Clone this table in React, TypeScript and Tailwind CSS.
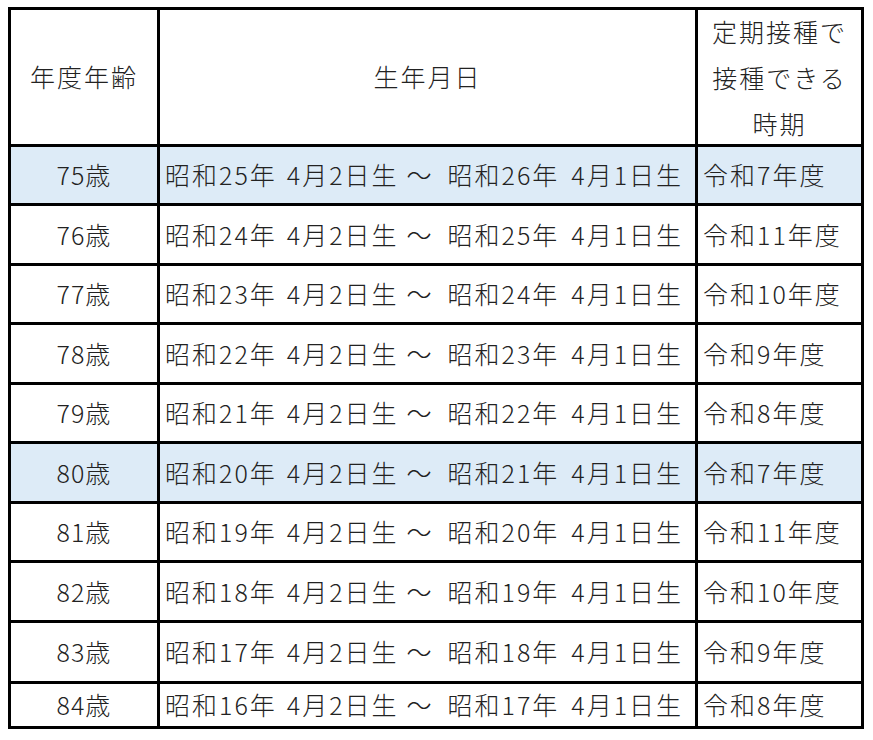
const rows = [
  { age: '75歳', from: '昭和25年', to: '昭和26年', term: '令和7年度', hl: true },
  { age: '76歳', from: '昭和24年', to: '昭和25年', term: '令和11年度', hl: false },
  { age: '77歳', from: '昭和23年', to: '昭和24年', term: '令和10年度', hl: false },
  { age: '78歳', from: '昭和22年', to: '昭和23年', term: '令和9年度', hl: false },
  { age: '79歳', from: '昭和21年', to: '昭和22年', term: '令和8年度', hl: false },
  { age: '80歳', from: '昭和20年', to: '昭和21年', term: '令和7年度', hl: true },
  { age: '81歳', from: '昭和19年', to: '昭和20年', term: '令和11年度', hl: false },
  { age: '82歳', from: '昭和18年', to: '昭和19年', term: '令和10年度', hl: false },
  { age: '83歳', from: '昭和17年', to: '昭和18年', term: '令和9年度', hl: false },
  { age: '84歳', from: '昭和16年', to: '昭和17年', term: '令和8年度', hl: false },
];

export default function App() {
  return (
    <div className="min-h-[740px] w-[873px] bg-white pl-[8px] pt-[7px] font-['Noto_Sans_CJK_JP','Noto_Sans',sans-serif] text-[25px] font-light text-[#222]">
      <div className="grid w-[856px] grid-cols-[146px_535px_163px] grid-rows-[134px_56px_57px_56px_57px_56px_57px_56px_57px_58px_42px] gap-[3px] bg-black p-[3px]">
        {/* header */}
        <div className="flex items-center justify-center bg-white tracking-[2px]">年度年齢</div>
        <div className="flex items-center justify-center bg-white tracking-[2px]">生年月日</div>
        <div className="flex flex-col items-center justify-center bg-white leading-[46px] tracking-[2px]">
          <span>定期接種で</span>
          <span>接種できる</span>
          <span>時期</span>
        </div>

        {rows.map((r) => {
          const bg = r.hl ? 'bg-[#ddebf7]' : 'bg-white';
          return (
            <div key={r.age} className="contents">
              <div className={`flex items-center justify-center tracking-[1px] ${bg}`}>{r.age}</div>
              <div className={`flex items-center whitespace-nowrap pl-[5px] tracking-[2px] ${bg}`}>
                {r.from}<span className="w-[10px]" />4月2日生
                <span className="ml-[8px] mr-[14px]">～</span>
                {r.to}<span className="w-[12px]" />4月1日生
              </div>
              <div className={`flex items-center whitespace-nowrap pl-[5px] tracking-[2px] ${bg}`}>{r.term}</div>
            </div>
          );
        })}
      </div>
    </div>
  );
}
